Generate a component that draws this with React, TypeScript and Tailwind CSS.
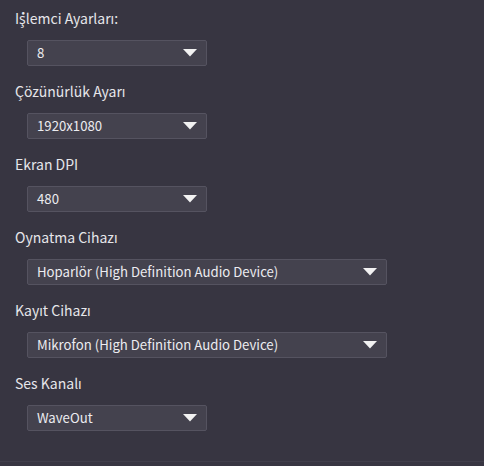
import React from "react";

const Arrow = () => (
  <svg width="14" height="8" viewBox="0 0 14 8" className="shrink-0">
    <path d="M0 0 H14 L7 7.5 Z" fill="#f2f2f2" />
  </svg>
);

const Field = ({ label, value, wide }: { label: string; value: string; wide?: boolean }) => (
  <div className="flex flex-col">
    <div className="h-[20px] leading-[20px] text-[14px] text-[#e6e6ea]">{label}</div>
    <div
      className={`mt-[12px] ml-[12px] h-[26px] ${wide ? "w-[360px]" : "w-[180px]"} flex items-center justify-between pl-[9px] pr-[9px] bg-[#44424e] border border-[#555360] rounded-[2px]`}
    >
      <span className="text-[13.2px] text-[#ececf0] leading-none">{value}</span>
      <Arrow />
    </div>
  </div>
);

export default function App() {
  return (
    <div
      lang="tr"
      className="w-[484px] h-[466px] bg-[#373541] relative overflow-hidden"
      style={{ fontFamily: '"Noto Sans CJK SC", "Noto Sans", sans-serif' }}
    >
      <div className="flex flex-col gap-[15px] pl-[15px] pt-[8px]">
        <Field label="İşlemci Ayarları:" value="8" />
        <Field label="Çözünürlük Ayarı" value="1920x1080" />
        <Field label="Ekran DPI" value="480" />
        <Field label="Oynatma Cihazı" value="Hoparlör (High Definition Audio Device)" wide />
        <Field label="Kayıt Cihazı" value="Mikrofon (High Definition Audio Device)" wide />
        <Field label="Ses Kanalı" value="WaveOut" />
      </div>
      <div className="absolute left-0 right-0 top-[461px] h-px bg-[#403e4a]" />
    </div>
  );
}
